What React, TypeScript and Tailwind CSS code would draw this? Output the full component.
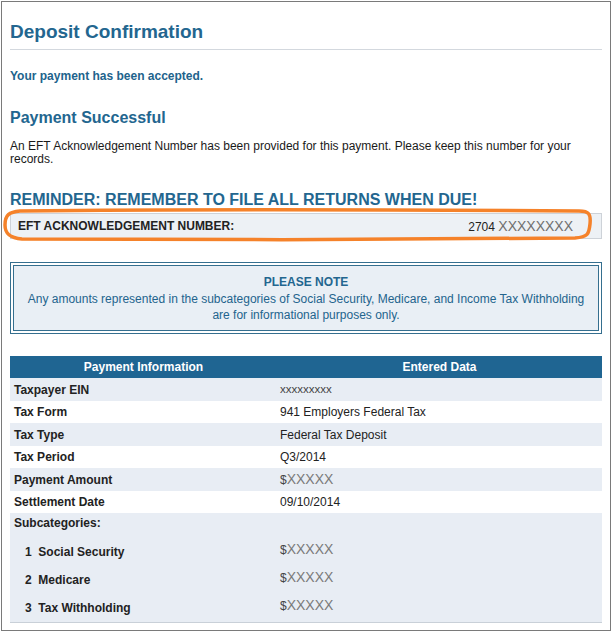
import React from "react";

function Money() {
  return (
    <span>
      <span className="text-[12px] text-[#444]">$</span>
      <span className="text-[14px] text-[#7a7a7a]">XXXXX</span>
    </span>
  );
}

export default function App() {
  const main = [
    { label: "Taxpayer EIN", value: <span className="text-[11.5px] text-[#444]">xxxxxxxxx</span>, light: true, h: "h-[23px]" },
    { label: "Tax Form", value: "941 Employers Federal Tax", light: false, h: "h-[22px]" },
    { label: "Tax Type", value: "Federal Tax Deposit", light: true, h: "h-[23px]" },
    { label: "Tax Period", value: "Q3/2014", light: false, h: "h-[22px]" },
    { label: "Payment Amount", value: <Money />, light: true, h: "h-[23px]" },
    { label: "Settlement Date", value: "09/10/2014", light: false, h: "h-[22px]" },
  ];
  const subs = [
    { n: "1", label: "Social Security" },
    { n: "2", label: "Medicare" },
    { n: "3", label: "Tax Withholding" },
  ];
  return (
    <div className="w-[612px] h-[633px] bg-white relative" style={{ fontFamily: '"Liberation Sans", Arial, sans-serif' }}>
      <div className="absolute left-[1px] top-[1px] w-[610px] h-[630px] border border-[#7a7a7a] px-[8px]">
        <h1 className="mt-[18px] text-[19px] leading-[24px] font-bold text-[#23668f]">Deposit Confirmation</h1>
        <div className="mt-[5px] h-px bg-[#d3d8de]" />
        <p className="mt-[19px] text-[12px] leading-[14px] font-bold text-[#21638c]">Your payment has been accepted.</p>
        <h2 className="mt-[25px] text-[16px] leading-[19px] font-bold text-[#23668f]">Payment Successful</h2>
        <p className="mt-[13px] text-[12px] leading-[13px] text-[#1a1a1a]">
          An EFT Acknowledgement Number has been provided for this payment. Please keep this number for your records.
        </p>
        <h2 className="mt-[24px] text-[16px] leading-[19px] font-bold text-[#23668f]">REMINDER: REMEMBER TO FILE ALL RETURNS WHEN DUE!</h2>
        <div className="mt-[4px] h-[26px] border border-[#cdd2d8] bg-[#edf1f5] flex items-center justify-between pl-[7px] pr-[28px]">
          <span className="text-[12px] font-bold text-[#222]">EFT ACKNOWLEDGEMENT NUMBER:</span>
          <span>
            <span className="text-[12px] text-[#222]">2704 </span>
            <span className="text-[14px] text-[#6f6f6f]">XXXXXXXX</span>
          </span>
        </div>
        <div className="mt-[23px] h-[72px] border-[4px] border-double border-[#356f8f] bg-[#e9eff5] bg-clip-padding text-center">
          <div className="pt-[9px] text-[12px] leading-[14px] font-bold text-[#23668f]">PLEASE NOTE</div>
          <div className="mt-[2px] text-[12px] leading-[16px] text-[#23648d]">
            Any amounts represented in the subcategories of Social Security, Medicare, and Income Tax Withholding
            <br />
            are for informational purposes only.
          </div>
        </div>
        <div className="mt-[22px] border-b border-[#c9d0d8]">
          <div className="h-[22px] bg-[#1f6592] flex items-center text-[12px] font-bold text-white">
            <div className="w-[267px] text-center">Payment Information</div>
            <div className="flex-1 text-center">Entered Data</div>
          </div>
          {main.map((r) => (
            <div key={r.label} className={`${r.h} flex items-center ${r.light ? "bg-[#e8edf4]" : "bg-white"}`}>
              <div className="w-[267px] pl-[4px] text-[12px] font-bold text-[#222]">{r.label}</div>
              <div className="flex-1 pl-[3px] text-[12px] text-[#222]">{r.value}</div>
            </div>
          ))}
          <div className="bg-[#e8edf4] pb-[5px]">
            <div className="h-[20px] flex items-center pl-[4px] text-[12px] font-bold text-[#222]">Subcategories:</div>
            {subs.map((s) => (
              <div key={s.n} className="h-[28px] flex">
                <div className="w-[267px] pl-[15px] pt-[12px] text-[12px] leading-[14px] font-bold text-[#222] whitespace-pre">
                  {s.n}  {s.label}
                </div>
                <div className="flex-1 pl-[3px] pt-[8px] leading-[16px]">
                  <Money />
                </div>
              </div>
            ))}
          </div>
        </div>
      </div>
      <svg className="absolute left-0 top-0 pointer-events-none" width="612" height="633" viewBox="0 0 612 633">
        <path
          d="M 20 211 C 200 209, 450 210, 579 211 C 589 211, 591 214, 590 224 C 589 234, 588 237, 575 238 C 400 240, 200 240, 22 239 C 9 238, 5 233, 5 225 C 5 215, 9 212, 20 211 Z"
          fill="none"
          stroke="#f5822a"
          strokeWidth="3.5"
        />
      </svg>
    </div>
  );
}
